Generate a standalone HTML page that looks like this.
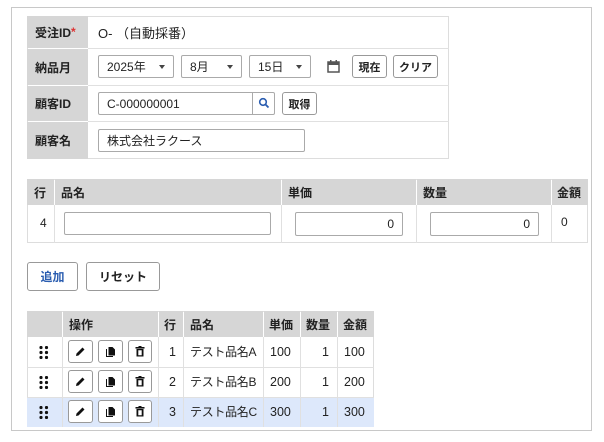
<!DOCTYPE html><html><head><meta charset="utf-8"><style>
*{box-sizing:border-box;margin:0;padding:0}
body{width:604px;height:442px;background:#fff;position:relative;font-family:"Liberation Sans","Noto Sans CJK JP",sans-serif;font-size:12px;color:#222;overflow:hidden}
.a{position:absolute}
.frame{left:11px;top:7px;width:581px;height:424px;border:1px solid #c8c8c8}
.lab{background:#d6d6d6;font-weight:bold;padding-left:8px;display:flex;align-items:center}
.inp{border:1px solid #aaa;border-radius:2px;background:#fff;display:flex;align-items:center;padding:0 8px}
.btn{border:1px solid #999;border-radius:3px;background:#fff;display:flex;align-items:center;justify-content:center;font-weight:bold;font-size:11px}
.hd{background:#d6d6d6;font-weight:bold;display:flex;align-items:center}
.caret{margin-left:auto;width:0;height:0;border-left:3.5px solid transparent;border-right:3.5px solid transparent;border-top:4px solid #444}
.t{font-size:12.5px;line-height:16px}
</style></head><body>
<div class="a frame"></div>
<div class="a" style="left:27px;top:16px;width:422px;height:143px;border:1px solid #ddd"></div>
<div class="a lab" style="left:27px;top:16px;width:61px;height:32px">受注ID<span style="color:#d33">*</span></div>
<div class="a lab" style="left:27px;top:49px;width:61px;height:36px">納品月</div>
<div class="a lab" style="left:27px;top:86px;width:61px;height:35px">顧客ID</div>
<div class="a lab" style="left:27px;top:122px;width:61px;height:37px">顧客名</div>
<div class="a" style="left:88px;top:48px;width:361px;height:1px;background:#e0e0e0"></div>
<div class="a" style="left:88px;top:85px;width:361px;height:1px;background:#e0e0e0"></div>
<div class="a" style="left:88px;top:121px;width:361px;height:1px;background:#e0e0e0"></div>
<div class="a" style="left:98px;top:23px;font-size:13px">O- （自動採番）</div>
<div class="a inp" style="left:98px;top:55px;width:76px;height:23px">2025年<span class="caret"></span></div>
<div class="a inp" style="left:181px;top:55px;width:61px;height:23px">8月<span class="caret"></span></div>
<div class="a inp" style="left:249px;top:55px;width:62px;height:23px">15日<span class="caret"></span></div>
<svg class="a" style="left:327px;top:60px" width="13" height="13" viewBox="0 0 13 13"><rect x="1" y="2" width="11" height="10" fill="none" stroke="#555" stroke-width="1.5"/><rect x="1" y="2" width="11" height="3" fill="#555"/><rect x="3" y="0" width="1.5" height="3" fill="#555"/><rect x="8.5" y="0" width="1.5" height="3" fill="#555"/></svg>
<div class="a btn" style="left:352px;top:55px;width:35px;height:23px">現在</div>
<div class="a btn" style="left:393px;top:55px;width:45px;height:23px">クリア</div>
<div class="a inp" style="left:98px;top:92px;width:177px;height:23px">C-000000001</div>
<div class="a" style="left:252px;top:92px;width:1px;height:23px;background:#aaa"></div>
<svg class="a" style="left:258px;top:97px" width="12" height="12" viewBox="0 0 12 12"><circle cx="5" cy="5" r="3.3" fill="none" stroke="#2a5db0" stroke-width="1.6"/><line x1="7.4" y1="7.4" x2="10.5" y2="10.5" stroke="#2a5db0" stroke-width="1.8"/></svg>
<div class="a btn" style="left:282px;top:92px;width:35px;height:23px">取得</div>
<div class="a inp" style="left:98px;top:129px;width:207px;height:23px">株式会社ラクース</div>
<div class="a" style="left:27px;top:179px;width:561px;height:64px;border:1px solid #ddd"></div>
<div class="a hd" style="left:27px;top:179px;width:27px;height:26px;padding-left:7px">行</div>
<div class="a hd" style="left:55px;top:179px;width:226px;height:26px;padding-left:6px">品名</div>
<div class="a hd" style="left:282px;top:179px;width:134px;height:26px;padding-left:6px">単価</div>
<div class="a hd" style="left:417px;top:179px;width:134px;height:26px;padding-left:6px">数量</div>
<div class="a hd" style="left:552px;top:179px;width:36px;height:26px;padding-left:5px">金額</div>
<div class="a" style="left:54px;top:205px;width:1px;height:38px;background:#e0e0e0"></div>
<div class="a" style="left:281px;top:205px;width:1px;height:38px;background:#e0e0e0"></div>
<div class="a" style="left:416px;top:205px;width:1px;height:38px;background:#e0e0e0"></div>
<div class="a" style="left:551px;top:205px;width:1px;height:38px;background:#e0e0e0"></div>
<div class="a" style="left:40px;top:216px">4</div>
<div class="a inp" style="left:64px;top:212px;width:207px;height:23px"></div>
<div class="a inp" style="left:295px;top:212px;width:108px;height:24px;justify-content:flex-end">0</div>
<div class="a inp" style="left:430px;top:212px;width:109px;height:24px;justify-content:flex-end">0</div>
<div class="a" style="left:561px;top:215px">0</div>
<div class="a btn" style="left:27px;top:262px;width:51px;height:29px;color:#2a5db0;font-size:12px">追加</div>
<div class="a btn" style="left:86px;top:262px;width:74px;height:29px;font-size:12px">リセット</div>
<div class="a" style="left:27px;top:311px;width:347px;height:116px;border:1px solid #ddd"></div>
<div class="a hd" style="left:27px;top:311px;width:35px;height:26px"></div>
<div class="a hd" style="left:63px;top:311px;width:95px;height:26px;padding-left:6px">操作</div>
<div class="a hd" style="left:159px;top:311px;width:24px;height:26px;padding-left:5px">行</div>
<div class="a hd" style="left:184px;top:311px;width:79px;height:26px;padding-left:6px">品名</div>
<div class="a hd" style="left:264px;top:311px;width:36px;height:26px;padding-left:5px">単価</div>
<div class="a hd" style="left:301px;top:311px;width:36px;height:26px;padding-left:5px">数量</div>
<div class="a hd" style="left:338px;top:311px;width:36px;height:26px;padding-left:5px">金額</div>
<div class="a" style="left:27px;top:397px;width:347px;height:30px;background:#dde8fb"></div>
<div class="a" style="left:27px;top:367px;width:347px;height:1px;background:#e0e0e0"></div>
<div class="a" style="left:27px;top:397px;width:347px;height:1px;background:#e0e0e0"></div>
<div class="a" style="left:62px;top:337px;width:1px;height:90px;background:#e0e0e0"></div>
<div class="a" style="left:158px;top:337px;width:1px;height:90px;background:#e0e0e0"></div>
<div class="a" style="left:183px;top:337px;width:1px;height:90px;background:#e0e0e0"></div>
<div class="a" style="left:263px;top:337px;width:1px;height:90px;background:#e0e0e0"></div>
<div class="a" style="left:300px;top:337px;width:1px;height:90px;background:#e0e0e0"></div>
<div class="a" style="left:337px;top:337px;width:1px;height:90px;background:#e0e0e0"></div>
<div id="rows"></div>
<script>
var d=[["1","テスト品名A","100","1","100"],["2","テスト品名B","200","1","200"],["3","テスト品名C","300","1","300"]];
var h="";d.forEach(function(r,i){var y=337+i*30;
h+='<svg class="a" style="left:39px;top:'+(y+9)+'px" width="10" height="13" viewBox="0 0 10 13">'+[0,5,10].map(function(yy){return '<circle cx="2" cy="'+(yy+1.5)+'" r="1.6" fill="#111"/><circle cx="7.5" cy="'+(yy+1.5)+'" r="1.6" fill="#111"/>'}).join('')+'</svg>';
h+='<div class="a btn" style="left:68px;top:'+(y+3)+'px;width:25px;height:23px"><svg width="11" height="11" viewBox="0 0 11 11"><path d="M1 10 L1.5 7.5 L7.5 1.5 L9.5 3.5 L3.5 9.5 Z" fill="#111"/></svg></div>';
h+='<div class="a btn" style="left:98px;top:'+(y+3)+'px;width:25px;height:23px"><svg width="11" height="12" viewBox="0 0 11 12"><path d="M1 3 V11 H8 V10 H2 V3Z" fill="#111"/><path d="M3.5 1 H7.5 L10 3.5 V9.5 H3.5Z" fill="#111"/></svg></div>';
h+='<div class="a btn" style="left:128px;top:'+(y+3)+'px;width:24px;height:23px"><svg width="10" height="11" viewBox="0 0 10 11"><rect x="0.5" y="1" width="9" height="1.6" fill="#111"/><rect x="3.5" y="0" width="3" height="1.5" fill="#111"/><path d="M1.5 3 H8.5 V10.5 H1.5Z M3.3 4.3 V9.2 H6.7 V4.3Z" fill="#111" fill-rule="evenodd"/></svg></div>';
h+='<div class="a t" style="left:169px;top:'+(y+7)+'px">'+r[0]+'</div>';
h+='<div class="a t" style="left:190px;top:'+(y+7)+'px;font-size:12px;letter-spacing:-0.3px">'+r[1]+'</div>';
h+='<div class="a t" style="left:270px;top:'+(y+7)+'px">'+r[2]+'</div>';
h+='<div class="a t" style="left:322px;top:'+(y+7)+'px">'+r[3]+'</div>';
h+='<div class="a t" style="left:344px;top:'+(y+7)+'px">'+r[4]+'</div>';});
document.getElementById("rows").innerHTML=h;
</script>
</body></html>
